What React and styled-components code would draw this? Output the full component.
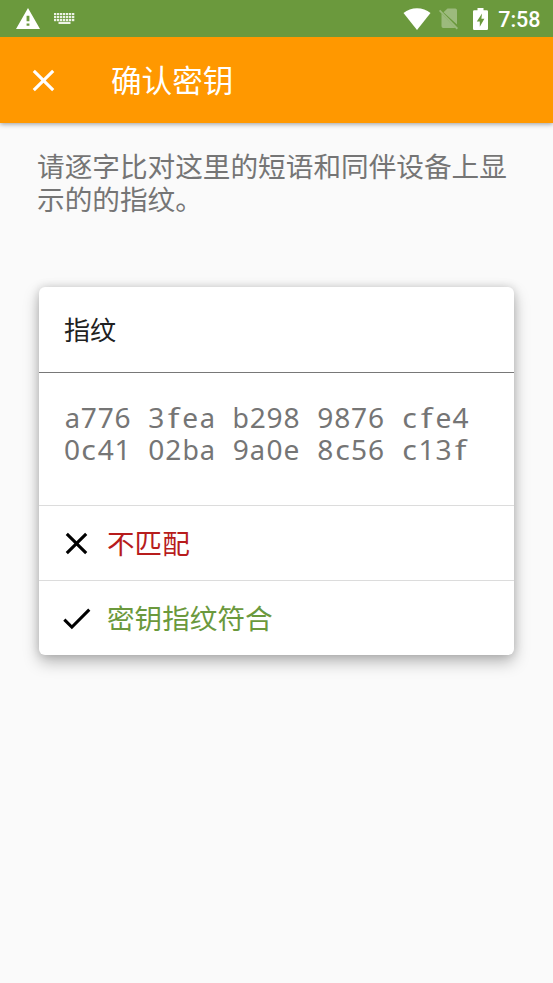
import React from 'react';
import styled, { createGlobalStyle } from 'styled-components';

const GlobalStyle = createGlobalStyle`
  * { box-sizing: border-box; }
  body {
    margin: 0;
    background: #fafafa;
    font-family: Roboto, "Noto Sans CJK SC", sans-serif;
  }
`;

const Screen = styled.main`
  display: flex;
  flex-direction: column;
  width: 553px;
  height: 983px;
  overflow: hidden;
  background: #fafafa;
`;

const StatusBar = styled.div`
  position: relative;
  z-index: 1;
  display: flex;
  flex: none;
  align-items: center;
  height: 37px;
  padding: 0 12.5px 0 15px;
  background: #6b993d;
  color: #fff;
`;

const StatusIcon = styled.svg`
  flex: none;
  display: block;
  width: ${(p) => p.$w}px;
  height: ${(p) => p.$h}px;
  margin-left: ${(p) => p.$gap || 0}px;
  fill: #fff;
`;

const Clock = styled.span`
  flex: none;
  padding-top: 2px;
  font: 500 21.5px/37px Roboto, sans-serif;
`;

const StatusGroup = styled.div`
  display: flex;
  align-items: center;
  height: 36px;
  margin-left: auto;
  margin-right: 10.5px;
`;

const AppBar = styled.header`
  display: flex;
  flex: none;
  align-items: center;
  height: 86px;
  padding-left: 24.5px;
  background: #ff9800;
  color: #fff;
  box-shadow: 0 1px 5px rgba(0, 0, 0, 0.4);
`;

const Title = styled.h1`
  margin: -2px 0 0 49.5px;
  font: 400 30.6px/44px "Noto Sans CJK SC", sans-serif;
`;

const Glyph = styled.svg`
  flex: none;
  display: block;
  width: 37px;
  height: 37px;
  fill: currentColor;
`;

const Description = styled.p`
  margin: 26px 37px 0;
  color: #757575;
  font: 400 27.65px/32.5px "Noto Sans CJK SC", sans-serif;
  white-space: pre-line;
`;

const Card = styled.section`
  display: flex;
  flex: none;
  flex-direction: column;
  width: 475px;
  height: 368px;
  margin: 73px 0 0 39px;
  border-radius: 6px;
  background: #fff;
  box-shadow: 0 7px 16px rgba(0, 0, 0, 0.27), 0 0 10px rgba(0, 0, 0, 0.15);
`;

const CardTitle = styled.h2`
  height: 86px;
  margin: 0;
  padding-left: 25px;
  border-bottom: 1px solid #787878;
  color: #212121;
  font: 400 26.1px/84px "Noto Sans CJK SC", sans-serif;
`;

const Fingerprint = styled.div`
  height: 132px;
  padding: 28px 0 0 24.5px;
  color: #757575;
  font: 400 28.1px/32px "Noto Sans", sans-serif;
`;

const HexLine = styled.div`
  display: flex;
  height: 32px;
  white-space: pre;
`;

const HexDigit = styled.span`
  display: block;
  width: 16.9px;
  text-align: center;
  transform: scaleX(${(p) => p.$stretch});
`;

const Action = styled.button`
  display: flex;
  align-items: center;
  height: 75px;
  padding: 0 0 0 18.5px;
  border: 0;
  border-top: 1px solid #dcdcdc;
  background: transparent;
  color: #000;
  text-align: left;
`;

const ActionLabel = styled.span`
  margin: -2px 0 0 12.5px;
  color: ${(p) => p.$color};
  font: 400 27.6px/40px "Noto Sans CJK SC", sans-serif;
`;

const CLOSE = 'M19 6.41L17.59 5 12 10.59 6.41 5 5 6.41 10.59 12 5 17.59 6.41 19 12 13.41 17.59 19 19 17.59 13.41 12z';
const CHECK = 'M9 16.17L4.83 12l-1.42 1.41L9 19 21 7l-1.41-1.41z';

const Icon = ({ path }) => (
  <Glyph viewBox="0 0 24 24"><path d={path} /></Glyph>
);

const STRETCH = { f: 1.2, c: 1.08, a: 0.97, b: 0.95 };

const HexRow = ({ value }) => (
  <HexLine>
    {[...value].map((ch, i) => (
      <HexDigit key={i} $stretch={STRETCH[ch] || 1}>{ch}</HexDigit>
    ))}
  </HexLine>
);

const keyRow = (y) =>
  Array.from({ length: 7 }, (_, i) => (
    <rect key={`${y}-${i}`} x={i * 3} y={y} width="2.3" height="2.2" />
  ));

export default function App() {
  return (
    <Screen>
      <GlobalStyle />
      <StatusBar>
        <StatusIcon $w={24} $h={21} $gap={0.5} viewBox="1 2 22 19" preserveAspectRatio="none">
          <path d="M1 21h22L12 2 1 21zm12.3-3h-2.6v-2h2.6v2zm0-4h-2.6v-5h2.6v5z" />
        </StatusIcon>
        <StatusIcon $w={21} $h={11} $gap={14.5} viewBox="0 0 21 11" opacity="0.88">
          {keyRow(0)}
          {keyRow(3)}
          {keyRow(6)}
          <rect x="4.5" y="8.8" width="12" height="2.2" />
        </StatusIcon>
        <StatusGroup>
          <StatusIcon $w={28} $h={22} viewBox="0 0 28 22">
            <path d="M14 22L0.5 5C4.2 1.9 9 0.3 14 0.3S23.8 1.9 27.5 5z" />
          </StatusIcon>
          <StatusIcon $w={20} $h={22} $gap={8} viewBox="0 0 20 22" opacity="0.33">
            <path d="M8.5.5h7.8a1.7 1.7 0 0 1 1.7 1.7v14.4L4.5 4.2z" />
            <path d="M2.5 5.4L16.4 20H4.2a1.7 1.7 0 0 1-1.7-1.7z" />
            <path d="M1.2 1.8L19 20.1l-1.3 1.3L0 3z" />
          </StatusIcon>
          <StatusIcon $w={15} $h={22} $gap={14} viewBox="0 0 15 22">
            <path fillRule="evenodd" d="M4.5 0h6v2.3h3.3q1.2 0 1.2 1.2v17.3q0 1.2-1.2 1.2H1.2Q0 22 0 20.8V3.5q0-1.2 1.2-1.2h3.3zM9 5.5L3.8 13.4h3v5.3l4.6-8H8.4z" />
          </StatusIcon>
        </StatusGroup>
        <Clock>7:58</Clock>
      </StatusBar>
      <AppBar>
        <Icon path={CLOSE} />
        <Title>确认密钥</Title>
      </AppBar>
      <Description>{'请逐字比对这里的短语和同伴设备上显\n示的的指纹。'}</Description>
      <Card>
        <CardTitle>指纹</CardTitle>
        <Fingerprint>
          <HexRow value="a776 3fea b298 9876 cfe4" />
          <HexRow value="0c41 02ba 9a0e 8c56 c13f" />
        </Fingerprint>
        <Action>
          <Icon path={CLOSE} />
          <ActionLabel $color="#b71c1c">不匹配</ActionLabel>
        </Action>
        <Action>
          <Icon path={CHECK} />
          <ActionLabel $color="#6b993d">密钥指纹符合</ActionLabel>
        </Action>
      </Card>
    </Screen>
  );
}
